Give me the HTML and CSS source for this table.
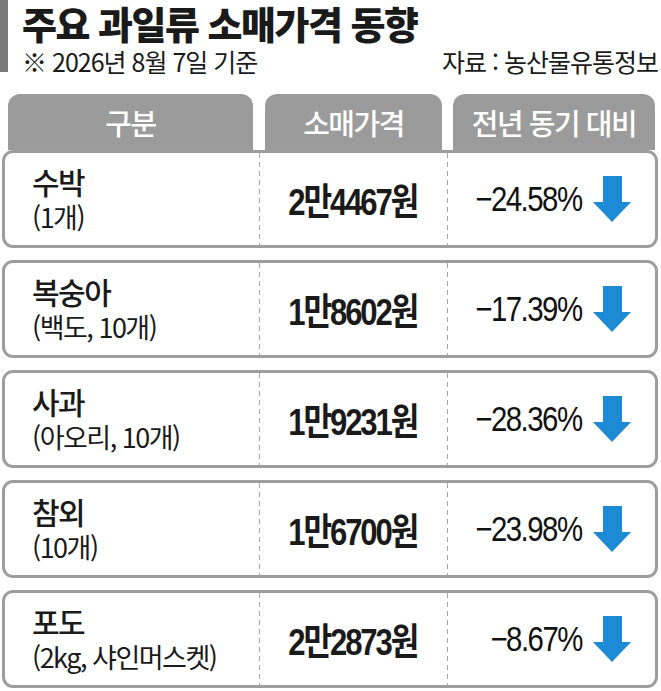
FILE: index.html
```html
<!DOCTYPE html>
<html lang="ko">
<head>
<meta charset="utf-8">
<title>주요 과일류 소매가격 동향</title>
<link rel="stylesheet" href="styles.css">
</head>
<body>
<div class="page">
  <header class="head">
    <div class="bar"></div>
    <div class="head-text">
      <h1 class="title">주요 과일류 소매가격 동향</h1>
      <div class="sub">
        <span class="sub-l">※ 2026년 8월 7일 기준</span>
        <span class="sub-r">자료 : 농산물유통정보</span>
      </div>
    </div>
  </header>

  <div class="table">
    <div class="thead">
      <div class="th th1"><span class="tab">구분</span></div>
      <div class="th th2"><span class="tab">소매가격</span></div>
      <div class="th th3"><span class="tab">전년 동기 대비</span></div>
    </div>

    <div class="row">
      <div class="c name"><span class="nm">수박</span><span class="sz">(1개)</span></div>
      <div class="c price"><span class="pv">2만4467원</span></div>
      <div class="c pct"><span class="pn">−24.58%</span><svg class="arr" viewBox="0 0 38 46" width="38" height="46"><path d="M10 0H29V26H38L19 46L0 26H10Z"/></svg></div>
    </div>
    <div class="row">
      <div class="c name"><span class="nm">복숭아</span><span class="sz">(백도, 10개)</span></div>
      <div class="c price"><span class="pv">1만8602원</span></div>
      <div class="c pct"><span class="pn">−17.39%</span><svg class="arr" viewBox="0 0 38 46" width="38" height="46"><path d="M10 0H29V26H38L19 46L0 26H10Z"/></svg></div>
    </div>
    <div class="row">
      <div class="c name"><span class="nm">사과</span><span class="sz">(아오리, 10개)</span></div>
      <div class="c price"><span class="pv">1만9231원</span></div>
      <div class="c pct"><span class="pn">−28.36%</span><svg class="arr" viewBox="0 0 38 46" width="38" height="46"><path d="M10 0H29V26H38L19 46L0 26H10Z"/></svg></div>
    </div>
    <div class="row">
      <div class="c name"><span class="nm">참외</span><span class="sz">(10개)</span></div>
      <div class="c price"><span class="pv">1만6700원</span></div>
      <div class="c pct"><span class="pn">−23.98%</span><svg class="arr" viewBox="0 0 38 46" width="38" height="46"><path d="M10 0H29V26H38L19 46L0 26H10Z"/></svg></div>
    </div>
    <div class="row">
      <div class="c name"><span class="nm">포도</span><span class="sz">(2kg, 샤인머스켓)</span></div>
      <div class="c price"><span class="pv">2만2873원</span></div>
      <div class="c pct"><span class="pn">−8.67%</span><svg class="arr" viewBox="0 0 38 46" width="38" height="46"><path d="M10 0H29V26H38L19 46L0 26H10Z"/></svg></div>
    </div>
  </div>
</div>
</body>
</html>
```

FILE: styles.css
```css
* { box-sizing: border-box; }
html, body { margin: 0; padding: 0; background: #fff; }
body {
  font-family: "Noto Sans CJK KR", "Noto Sans", sans-serif;
  color: #1a1a1a;
}
.page { width: 661px; height: 691px; overflow: hidden; }

.head { display: flex; }
.bar { width: 8px; height: 72px; background: #7a7a7a; flex: none; }
.head-text { flex: 1; padding-left: 14px; padding-right: 3px; }
.title {
  margin: 0;
  font-size: 38px;
  line-height: 46px;
  font-weight: 900;
  letter-spacing: -1.5px;
  color: #1a1a1a;
  white-space: nowrap;
}
.sub {
  margin-top: 1px;
  display: flex;
  justify-content: space-between;
  font-size: 25px;
  line-height: 28px;
  letter-spacing: -1px;
}

.table { margin-top: 19px; padding: 0 3px 0 2px; }
.thead { display: grid; grid-template-columns: 257px 188px 211px; height: 56px; }
.th { display: flex; }
.th1 { padding: 0 6px 0 6px; }
.th2 { padding: 0 5px 0 6px; }
.th3 { padding: 0 3px 0 6px; }
.tab {
  flex: 1;
  background: #9b9b9b;
  border-radius: 12px 12px 0 0;
  color: #fff;
  font-size: 29px;
  font-weight: 500;
  line-height: 56px;
  text-align: center;
  letter-spacing: -1.5px;
}

.row {
  display: grid;
  grid-template-columns: 254px 188px 1fr;
  height: 98px;
  border: 3px solid #9d9d9d;
  border-radius: 11px;
  margin-bottom: 12px;
  background: #fff;
}
.c { display: flex; align-items: center; }
.c + .c {
  background: linear-gradient(#a8a8a8 55%, transparent 0) left top / 1px 9px repeat-y;
}
.name {
  flex-direction: column;
  align-items: flex-start;
  justify-content: center;
  padding-left: 27px;
}
.nm { font-size: 30px; line-height: 36px; font-weight: 500; letter-spacing: -1.5px; }
.sz { font-size: 27px; line-height: 36px; letter-spacing: -1.5px; }

.price { justify-content: center; }
.pv {
  display: inline-block;
  font-family: "Liberation Sans", "Noto Sans CJK KR", sans-serif;
  font-weight: 700;
  font-size: 37px;
  letter-spacing: -2.5px;
  transform: scaleX(0.84);
}

.pct { justify-content: flex-end; padding-right: 24px; gap: 11px; }
.pn {
  display: inline-block;
  font-family: "Liberation Sans", "Noto Sans CJK KR", sans-serif;
  font-size: 35px;
  letter-spacing: -1.8px;
  transform: scaleX(0.84);
  transform-origin: right center;
  color: #111;
}
.arr { fill: #1c8ad5; flex: none; }
```
